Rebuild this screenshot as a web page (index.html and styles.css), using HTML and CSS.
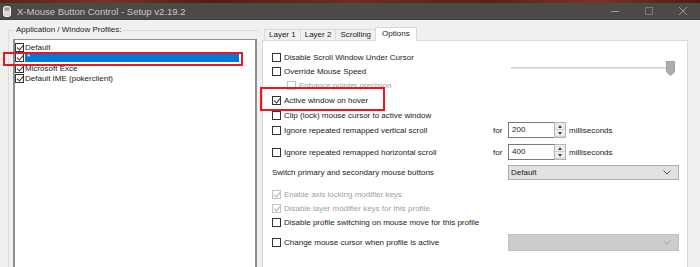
FILE: index.html
```html
<!DOCTYPE html>
<html>
<head>
<meta charset="utf-8">
<link rel="stylesheet" href="styles.css">
</head>
<body>
<div class="strip"></div>
<div class="titlebar">
  <svg class="appicon" width="8" height="11" viewBox="0 0 8 11"><rect x="0.5" y="0.5" width="7" height="10" rx="2" fill="#d8d8d8" stroke="#f4f4f4"/><rect x="1.5" y="1.5" width="5" height="3" fill="#9a9a9a"/></svg>
  <span class="title">X-Mouse Button Control - Setup v2.19.2</span>
  <div class="controls">
    <svg width="10" height="10" viewBox="0 0 10 10"><path d="M1 5.5H9" stroke="#9a9a9a" stroke-width="1"/></svg>
    <svg width="10" height="10" viewBox="0 0 10 10"><rect x="1.5" y="1.5" width="7" height="7" fill="none" stroke="#777" stroke-width="1"/></svg>
    <svg width="10" height="10" viewBox="0 0 10 10"><path d="M1 1L9 9M9 1L1 9" stroke="#9a9a9a" stroke-width="1"/></svg>
  </div>
</div>
<div class="main">
  <div class="left">
    <div class="group">
      <span class="legend">Application / Window Profiles:</span>
      <div class="listbox">
        <div class="lrow"><span class="cb checked"></span><span>Default</span></div>
        <div class="lrow sel"><span class="cb checked"></span><span class="hl">*</span></div>
        <div class="lrow"><span class="cb checked"></span><span>Microsoft Exce</span></div>
        <div class="lrow"><span class="cb checked"></span><span>Default IME (pokerclient)</span></div>
      </div>
    </div>
    <div class="redbox rb1"></div>
  </div>
  <div class="right">
    <div class="tabs">
      <div class="tab">Layer 1</div>
      <div class="tab">Layer 2</div>
      <div class="tab">Scrolling</div>
      <div class="tab active">Options</div>
    </div>
    <div class="panel">
      <div class="row h14 first"><span class="cb"></span><span>Disable Scroll Window Under Cursor</span></div>
      <div class="row h15"><span class="lab"><span class="cb"></span><span>Override Mouse Speed</span></span>
        <div class="slider"><div class="track"></div><svg class="thumb" width="9" height="15" viewBox="0 0 9 15"><path d="M0.5 0.5H8.5V11L4.5 14.5L0.5 11Z" fill="#adadad" stroke="#a0a0a0"/></svg></div>
      </div>
      <div class="row h13 indent dis"><span class="cb"></span><span>Enhance pointer precision</span></div>
      <div class="row h16"><span class="cb checked"></span><span>Active window on hover</span></div>
      <div class="row h14"><span class="cb"></span><span>Clip (lock) mouse cursor to active window</span></div>
      <div class="row h16"><span class="lab"><span class="cb"></span><span>Ignore repeated remapped vertical scroll</span></span>
        <span class="for">for</span><span class="num">200</span><span class="spin"><i class="up"></i><i class="dn"></i></span><span class="ms">milliseconds</span></div>
      <div class="row h16 mt6"><span class="lab"><span class="cb"></span><span>Ignore repeated remapped horizontal scroll</span></span>
        <span class="for">for</span><span class="num">400</span><span class="spin"><i class="up"></i><i class="dn"></i></span><span class="ms">milliseconds</span></div>
      <div class="row h16 mt4"><span class="lab plain">Switch primary and secondary mouse buttons</span>
        <span class="combo">Default<svg width="8" height="5" viewBox="0 0 8 5"><path d="M0.5 0.5L4 4L7.5 0.5" fill="none" stroke="#555"/></svg></span></div>
      <div class="row h14 mt7 dis"><span class="cb checked"></span><span>Enable axis locking modifier keys</span></div>
      <div class="row h14 dis"><span class="cb checked"></span><span>Disable layer modifier keys for this profile</span></div>
      <div class="row h14"><span class="cb"></span><span>Disable profile switching on mouse move for this profile</span></div>
      <div class="row h17 mt5"><span class="lab"><span class="cb"></span><span>Change mouse cursor when profile is active</span></span>
        <span class="combo disabled"><svg width="8" height="5" viewBox="0 0 8 5"><path d="M0.5 0.5L4 4L7.5 0.5" fill="none" stroke="#aaa"/></svg></span></div>
    </div>
    <div class="redbox rb2"></div>
  </div>
</div>
</body>
</html>
```
FILE: styles.css
```css
* { box-sizing: border-box; }
html, body { margin: 0; padding: 0; }
body {
  width: 700px; height: 267px; overflow: hidden;
  background: #f0f0f0;
  font-family: "Liberation Sans", Arial, sans-serif;
  font-size: 8px; color: #1a1a1a;
}
.strip {
  height: 3px;
  background: linear-gradient(90deg, #5a2418 0%, #7a3322 15%, #4f1f16 30%, #6e2d1e 50%, #5a2216 70%, #7b3424 85%, #4d1e15 100%);
}
.titlebar {
  height: 17px; background: #4b4a48;
  display: flex; align-items: center; padding-left: 3px;
  border-bottom: 1px solid #3e3d3b;
}
.appicon { margin-right: 6px; margin-top: 1px; }
.title { color: #c9c9c9; font-size: 9.5px; }
.controls { margin-left: auto; display: flex; gap: 24px; padding-right: 12px; align-items: center; }
.main { display: flex; height: 247px; overflow: hidden; }
.left { position: relative; width: 260px; padding: 10px 0 0 8px; }
.group {
  position: relative; height: 237px; width: 251px;
  border-left: 1px solid #dcdcdc; border-top: 1px solid #dcdcdc;
  padding: 8px 0 0 4px;
}
.legend { position: absolute; top: -6px; left: 6px; background: #f0f0f0; padding: 0 1px; color: #1a1a1a; }
.listbox {
  background: #fff; height: 228px; width: 244px;
  border: 1px solid #8e8f8f; border-bottom: none; border-right-width: 2px; border-left-width: 2px;
  padding-top: 2px;
}
.lrow { display: flex; align-items: center; height: 10px; padding-left: 0; }
.lrow .cb { margin-right: 1px; }
.lrow .hl { flex: 0 0 214px; height: 10px; line-height: 10px; padding-left: 2px; }
.lrow.sel .hl { background: #0078d7; color: #fff; }
.lrow:nth-child(3) { margin-top: 1px; }
.cb {
  display: inline-block; width: 9px; height: 9px; flex: 0 0 9px;
  border: 1px solid #333; background: #fff; margin-right: 3px; position: relative;
}
.cb.checked::after {
  content: ""; position: absolute; left: 2px; top: 0px; width: 3px; height: 5px;
  border-right: 1px solid #333; border-bottom: 1px solid #333; transform: rotate(40deg);
}
.dis { color: #a0a0a0; }
.dis .cb { border-color: #c4c4c4; }
.dis .cb.checked::after { border-color: #b0b0b0; }
.redbox { position: absolute; border: 2px solid #f0141e; }
.rb1 { left: 3px; top: 32px; width: 240px; height: 14px; }
.rb2 { left: -2px; top: 67px; width: 125px; height: 24px; }
.right { position: relative; width: 425px; margin-left: 2px; padding-top: 7px; }
.tabs { display: flex; align-items: flex-end; height: 13px; padding-left: 2px; }
.tab {
  height: 11px; line-height: 10px; padding: 0 4px;
  border: 1px solid #d9d9d9; border-bottom: none; background: #f0f0f0;
  margin-right: -1px;
}
.tab.active { height: 14px; background: #fff; line-height: 12px; position: relative; top: 1px; padding: 0 6px; }
.panel {
  background: #fff; border: 1px solid #d9d9d9; border-bottom: none; height: 227px; width: 426px;
  padding: 9px 0 0 9px;
}
.row { display: flex; align-items: center; }
.h13 { height: 13px; } .h14 { height: 14px; } .h15 { height: 15px; } .h16 { height: 16px; } .h17 { height: 17px; }
.mt4 { margin-top: 4px; } .mt5 { margin-top: 5px; } .mt6 { margin-top: 6px; } .mt7 { margin-top: 7px; }
.indent { padding-left: 15px; }
.lab { display: flex; align-items: center; width: 221px; }
.slider { position: relative; margin-left: 18px; width: 164px; height: 15px; top: -3px; }
.track { position: absolute; left: 0; right: 5px; top: 6px; height: 2px; background: #e2e2e2; border-top: 1px solid #d4d4d4; }
.thumb { position: absolute; right: 0; top: 0; }
.for { width: 15px; }
.num {
  width: 46px; height: 16px; border: 1px solid #7a7a7a; border-right: none; line-height: 13px; padding-left: 3px;
}
.spin { display: flex; flex-direction: column; width: 12px; height: 16px; border: 1px solid #b5b5b5; background: #f4f4f4; }
.spin i { flex: 1; position: relative; border-bottom: 1px solid #d0d0d0; background: #ececec; }
.spin i.up::after { content: ""; position: absolute; left: 3px; top: 2px; border: 2.5px solid transparent; border-bottom: 3px solid #444; border-top: none; }
.spin i.dn::after { content: ""; position: absolute; left: 3px; top: 2px; border: 2.5px solid transparent; border-top: 3px solid #444; border-bottom: none; }
.ms { margin-left: 3px; }
.combo {
  margin-left: 15px; width: 171px; height: 15px; background: #e1e1e1; border: 1px solid #adadad;
  display: flex; align-items: center; justify-content: space-between; padding: 0 7px 0 2px;
}
.combo.disabled { background: #cccccc; border-color: #c2c2c2; justify-content: flex-end; height: 17px; }
```
